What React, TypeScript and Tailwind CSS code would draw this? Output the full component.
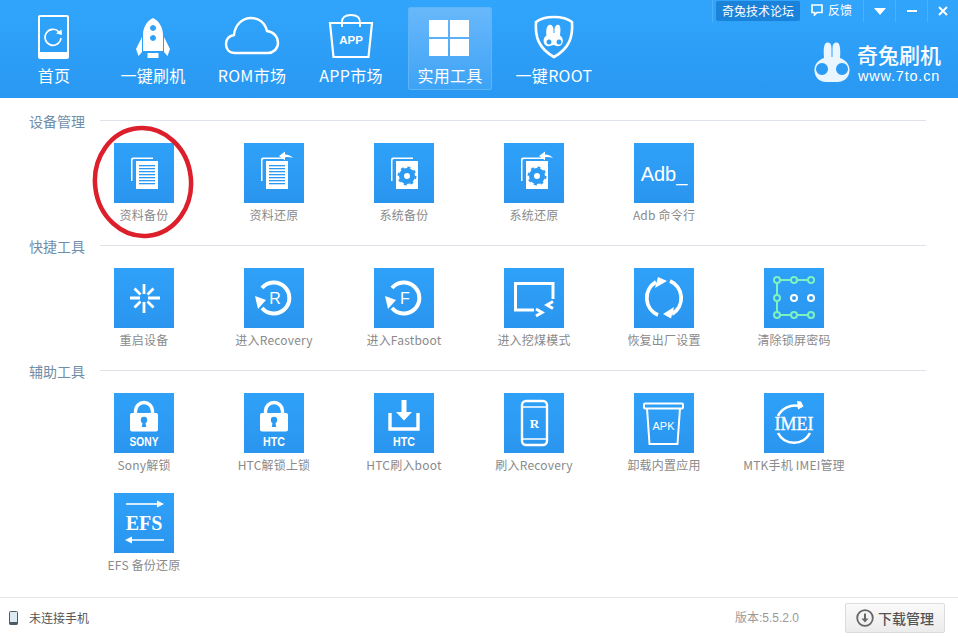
import type { ReactNode } from "react";

const cjk = "font-['Microsoft_YaHei','Noto_Sans_CJK_SC','Liberation_Sans',sans-serif]";

const Svg = ({ children }: { children: ReactNode }) => (
	<svg viewBox="0 0 60 60" className="h-full w-full">
		{children}
	</svg>
);

const BLUE = "#2b9af3";

// white sheet with a lighter one peeking out behind it
const Sheets = ({ children }: { children?: ReactNode }) => (
	<>
		<path d="M17 38V16.5q0-2 2-2h20v1.5H20q-1.500 0-1.500 1.500V38z" fill="#fff" />
		<rect x="22" y="18" width="22" height="28" fill="#fff" />
		{children}
	</>
);

const DocLines = () => (
	<g fill={BLUE}>
		{[22, 25, 28, 31, 34, 37, 40].map((y) => (
			<rect key={y} x="25" y={y} width="16" height="1.300" />
		))}
	</g>
);

const Gear = () => (
	<g>
		<circle cx="33" cy="33" r="5.500" fill="none" stroke={BLUE} strokeWidth="5" />
		<circle cx="33" cy="33" r="8.500" fill="none" stroke={BLUE} strokeWidth="2" strokeDasharray="3 3.700" />
	</g>
);

const BackArrow = () => (
	<g fill="#fff">
		<path d="M35 13l6-4.500v3q5 0 8 3.500-3-1.200-8-.8v3z" />
	</g>
);

const Reload = ({ letter }: { letter: string }) => (
	<Svg>
		<path d="M18 20A15.500 15.500 0 1 1 18 40" fill="none" stroke="#fff" strokeWidth="4" />
		<path d="M11 28l11 4-8 9z" fill="#fff" />
		<text x="31" y="36" textAnchor="middle" fontSize="16" fill="#fff" fontFamily="Liberation Sans, sans-serif">
			{letter}
		</text>
	</Svg>
);

const Lock = ({ label, width }: { label: string; width: number }) => (
	<Svg>
		<path d="M21.500 21v-3a8.500 8.500 0 0 1 17 0v3" fill="none" stroke="#fff" strokeWidth="3.400" />
		<rect x="16" y="20" width="28" height="18.500" rx="2" fill="#fff" />
		<circle cx="30" cy="27" r="3.200" fill={BLUE} />
		<path d="M28.800 28h2.400l1 6h-4.400z" fill={BLUE} />
		<text
			x="30"
			y="52.500"
			textAnchor="middle"
			fontSize="12"
			fontWeight="700"
			textLength={width}
			lengthAdjust="spacingAndGlyphs"
			fill="#fff"
			fontFamily="Liberation Sans, sans-serif"
		>
			{label}
		</text>
	</Svg>
);

const tileIcons: Record<string, ReactNode> = {
	backup: (
		<Svg>
			<Sheets>
				<DocLines />
			</Sheets>
		</Svg>
	),
	restore: (
		<Svg>
			<Sheets>
				<DocLines />
			</Sheets>
			<BackArrow />
		</Svg>
	),
	sysBackup: (
		<Svg>
			<Sheets>
				<Gear />
			</Sheets>
		</Svg>
	),
	sysRestore: (
		<Svg>
			<Sheets>
				<Gear />
			</Sheets>
			<BackArrow />
		</Svg>
	),
	adb: (
		<Svg>
			<text x="30" y="38" textAnchor="middle" fontSize="20" fill="#fff" fontFamily="Liberation Sans, sans-serif">
				Adb_
			</text>
		</Svg>
	),
	reboot: (
		<Svg>
			<g stroke="#fff" strokeWidth="2.800">
				<path d="M30 16v10M30 34v11M16 30h10M34 30h12" />
				<path d="M20.500 20.500l6 6M33.500 33.500l6 6M39.500 20.500l-6 6M26.500 33.500l-6 6" />
			</g>
		</Svg>
	),
	recovery: <Reload letter="R" />,
	fastboot: <Reload letter="F" />,
	dig: (
		<Svg>
			<path d="M49 31V15.500H11.500V42H30" fill="none" stroke="#fff" strokeWidth="3" />
			<path d="M32 41l6 3.500-6 3.500M49 33.500l-6 3.500 6 3.500" fill="none" stroke="#fff" strokeWidth="3" />
		</Svg>
	),
	reset: (
		<Svg>
			<path d="M24 47A18.500 18.500 0 0 1 22 14" fill="none" stroke="#fff" strokeWidth="3.800" />
			<path d="M21 20l3-11 9 4z" fill="#fff" />
			<path d="M36 13A18.500 18.500 0 0 1 38 46" fill="none" stroke="#fff" strokeWidth="3.800" />
			<path d="M40 39l-11 7 8 4.500z" fill="#fff" />
		</Svg>
	),
	pattern: (
		<Svg>
			<path d="M13 12h34M13 12v35M13 47h34" fill="none" stroke="#7df2bf" strokeWidth="2" />
			{[
				[13, 12],
				[30, 12],
				[47, 12],
				[13, 30],
				[13, 47],
				[30, 47],
				[47, 47],
			].map(([cx, cy]) => (
				<circle key={`${cx}-${cy}`} cx={cx} cy={cy} r="3" fill={BLUE} stroke="#7df2bf" strokeWidth="2" />
			))}
			<circle cx="30" cy="30" r="3" fill="none" stroke="#fff" strokeWidth="2" />
			<circle cx="47" cy="30" r="3" fill="none" stroke="#fff" strokeWidth="2" />
		</Svg>
	),
	sony: <Lock label="SONY" width={29} />,
	htc: <Lock label="HTC" width={22} />,
	htcBoot: (
		<Svg>
			<path d="M16 20v16h28V20" fill="none" stroke="#fff" strokeWidth="3.400" />
			<path d="M27.500 7h5v12h5.500l-8 8.500-8-8.500h5.500z" fill="#fff" />
			<text
				x="30"
				y="52.500"
				textAnchor="middle"
				fontSize="12"
				fontWeight="700"
				textLength={22}
				lengthAdjust="spacingAndGlyphs"
				fill="#fff"
				fontFamily="Liberation Sans, sans-serif"
			>
				HTC
			</text>
		</Svg>
	),
	flashR: (
		<Svg>
			<rect x="18" y="8" width="25" height="44" rx="4" fill="none" stroke="#fff" strokeWidth="2.400" />
			<path d="M18 14h25M18 46h25" stroke="#fff" strokeWidth="1.600" />
			<text x="30.500" y="35" textAnchor="middle" fontSize="13" fontWeight="700" fill="#fff" fontFamily="Liberation Serif, serif">
				R
			</text>
		</Svg>
	),
	apk: (
		<Svg>
			<rect x="10" y="10.500" width="39" height="5" rx="1" fill="none" stroke="#fff" strokeWidth="2" />
			<path d="M13 15l2.500 36h28L46 15" fill="none" stroke="#fff" strokeWidth="2" />
			<text x="29.500" y="37" textAnchor="middle" fontSize="11" fill="#fff" fontFamily="Liberation Sans, sans-serif">
				APK
			</text>
		</Svg>
	),
	imei: (
		<Svg>
			<path d="M14 23a19 19 0 0 1 21-10" fill="none" stroke="#fff" strokeWidth="2.600" />
			<path d="M33 8l4 .5 2.500 5-5.500 3z" fill="#fff" />
			<path d="M14 40a18 18 0 0 0 32 0" fill="none" stroke="#fff" strokeWidth="2.600" />
			<text x="30" y="37" textAnchor="middle" fontSize="18" stroke="#fff" strokeWidth="0.300" fill="#fff" fontFamily="Liberation Serif, serif">
				IMEI
			</text>
		</Svg>
	),
	efs: (
		<Svg>
			<path d="M12 11h32" stroke="#fff" strokeWidth="1.600" />
			<path d="M50 11l-7-3.500v7z" fill="#fff" />
			<text x="30" y="37" textAnchor="middle" fontSize="20" fontWeight="700" fill="#fff" fontFamily="Liberation Serif, serif">
				EFS
			</text>
			<path d="M17 47h33" stroke="#fff" strokeWidth="1.600" />
			<path d="M11 47l7-3.500v7z" fill="#fff" />
		</Svg>
	),
};

const sections = [
	{
		title: "设备管理",
		items: [
			["backup", "资料备份"],
			["restore", "资料还原"],
			["sysBackup", "系统备份"],
			["sysRestore", "系统还原"],
			["adb", "Adb 命令行"],
		],
	},
	{
		title: "快捷工具",
		items: [
			["reboot", "重启设备"],
			["recovery", "进入Recovery"],
			["fastboot", "进入Fastboot"],
			["dig", "进入挖煤模式"],
			["reset", "恢复出厂设置"],
			["pattern", "清除锁屏密码"],
		],
	},
	{
		title: "辅助工具",
		items: [
			["sony", "Sony解锁"],
			["htc", "HTC解锁上锁"],
			["htcBoot", "HTC刷入boot"],
			["flashR", "刷入Recovery"],
			["apk", "卸载内置应用"],
			["imei", "MTK手机 IMEI管理"],
			["efs", "EFS 备份还原"],
		],
	},
];

const navItems: { label: string; icon: ReactNode; active?: boolean; last?: boolean }[] = [
	{
		label: "首页",
		icon: (
			<>
				<path
					fillRule="evenodd"
					d="M16 1h27q2 0 2 2v40q0 2-2 2H16q-2 0-2-2V3q0-2 2-2zm0 2v35h27V3z"
					fill="#fff"
				/>
				<path d="M35 18a8 8 0 1 0 2 6" fill="none" stroke="#fff" strokeWidth="1.600" />
				<path d="M32 19.500l5.500-4 .5 5.500z" fill="#fff" />
			</>
		),
	},
	{
		label: "一键刷机",
		icon: (
			<>
				<path
					fillRule="evenodd"
					d="M30 4c6 3 10 9 10 17v16H20V21c0-8 4-14 10-17zm0 7a3 3 0 1 0 .01 0zm0 10a3 3 0 1 0 .01 0z"
					fill="#fff"
				/>
				<path d="M19 23v15l-3.500 4-2.500-7zM41 23v15l3.500 4 2.500-7z" fill="#fff" />
				<rect x="24.500" y="39" width="11" height="5" fill="#fff" />
			</>
		),
	},
	{
		label: "ROM市场",
		icon: (
			<path
				d="M13 39C7 39 4 35 4 30c0-5 3-8 8-9C13 10 21 4 29 4c8 0 14 5 16 13 7 1 11 6 11 12 0 6-5 10-10 10z"
				fill="none"
				stroke="#fff"
				strokeWidth="2.400"
			/>
		),
	},
	{
		label: "APP市场",
		icon: (
			<>
				<path d="M9 9h42l-3.500 34h-35z" fill="none" stroke="#fff" strokeWidth="2.200" />
				<path d="M21 13V8q0-7 9-7t9 7v5" fill="none" stroke="#fff" strokeWidth="1.800" />
				<text x="30" y="30" textAnchor="middle" fontSize="11.500" fontWeight="700" fill="#fff" fontFamily="Liberation Sans, sans-serif">
					APP
				</text>
			</>
		),
	},
	{
		label: "实用工具",
		active: true,
		icon: (
			<>
				<rect x="9" y="6" width="19" height="17" fill="#fff" />
				<rect x="30" y="6" width="19" height="17" fill="#fff" />
				<rect x="9" y="25" width="19" height="17" fill="#fff" />
				<rect x="30" y="25" width="19" height="17" fill="#fff" />
			</>
		),
	},
	{
		label: "一键ROOT",
		last: true,
		icon: (
			<>
				<path
					d="M30 3c7 0 13 1 18 5 1 14-2 26-18 35C14 34 11 22 12 8c5-4 11-5 18-5z"
					fill="none"
					stroke="#fff"
					strokeWidth="2.600"
				/>
				<path
					fillRule="evenodd"
					d="M25 11c2.500-1 4 1 4.500 4v4h1v-4c.5-3 2-5 4.500-4 2 1.500 1.500 7 1 10.500 3.500 2 4 7.500.5 10-2 1.300-5 .5-6.500-.5h-1C27 32 24 32.800 22 31.500c-3.500-2.500-3-8 .5-10-.5-3.500-.5-9 2.500-10.500zm0 14.500a2.500 2.500 0 1 0 .01 0zm10 0a2.500 2.500 0 1 0 .01 0z"
					fill="#fff"
				/>
			</>
		),
	},
];

function NavItem({ label, icon, active, last }: (typeof navItems)[number]) {
	return (
		<div
			className={`flex h-[83px] w-[84px] flex-col items-center rounded-[2px] ${last ? "ml-[5px]" : ""} ${
				active ? "border border-[#5db5f8] bg-gradient-to-b from-[#68b8fb] to-[#3da3f5]" : ""
			}`}
		>
			<svg viewBox="0 0 60 48" className={`h-[48px] w-[60px] shrink-0 ${active ? "mt-[6px]" : "mt-[7px]"}`}>
				{icon}
			</svg>
			<span className="mt-[1px] whitespace-nowrap text-[16px] leading-[24px] tracking-[0.3px] text-white">{label}</span>
		</div>
	);
}

function Tile({ icon, label }: { icon: string; label: string }) {
	return (
		<div className="flex h-[80px] w-[130px] flex-col items-center">
			<div className="h-[60px] w-[60px] bg-gradient-to-b from-[#2fa1f9] to-[#2a95ee]">{tileIcons[icon]}</div>
			<span className="mt-[4px] whitespace-nowrap text-[12px] leading-[16px] tracking-[0.2px] text-[#8a8a8a]">{label}</span>
		</div>
	);
}

export default function App() {
	return (
		<div className={`relative flex h-[637px] w-[958px] flex-col overflow-hidden bg-white ${cjk}`}>
			{/* Top bar */}
			<header className="flex h-[98px] shrink-0 justify-between bg-gradient-to-b from-[#31a5fc] to-[#2998f2]">
				<nav className="flex items-start gap-[15px] pl-[12px] pt-[7px]">
					{navItems.map((item) => (
						<NavItem key={item.label} {...item} />
					))}
				</nav>

				<div className="flex flex-col items-end">
					{/* Window buttons */}
					<div className="flex h-[22px] items-start text-[12px] leading-[20px] text-white">
						<div className="flex h-[22px] items-start border-l border-[#4fb0f7] pl-[3px]">
							<span className="mt-[1px] flex h-[20px] w-[84px] items-center justify-center rounded-[2px] bg-[#1b82da]">
								奇兔技术论坛
							</span>
						</div>
						<div className="flex h-[22px] w-[64px] items-center justify-center gap-[5px] border-r border-[#4fb0f7] pb-[2px]">
							<svg viewBox="0 0 12 12" className="h-[12px] w-[12px]">
								<path d="M1 1h10v7.500H6L3.500 11V8.500H1z" fill="none" stroke="#fff" strokeWidth="1.600" />
							</svg>
							<span>反馈</span>
						</div>
						<div className="flex h-[22px] w-[32px] items-center justify-center border-r border-[#4fb0f7] pt-[1px]">
							<svg viewBox="0 0 12 7" className="h-[7px] w-[12px]">
								<path d="M0 0h12L6 7z" fill="#fff" />
							</svg>
						</div>
						<div className="flex h-[22px] w-[32px] items-center justify-center border-r border-[#4fb0f7]">
							<span className="h-[2px] w-[10px] bg-white" />
						</div>
						<div className="flex h-[22px] w-[30px] items-center justify-center">
							<svg viewBox="0 0 10 10" className="h-[10px] w-[10px]">
								<path d="M1 1l8 8M9 1l-8 8" stroke="#fff" strokeWidth="2" />
							</svg>
						</div>
					</div>

					{/* Logo */}
					<div className="mt-[20px] flex items-start gap-[7px] pr-[17px]">
						<svg viewBox="0 0 36 40" className="h-[40px] w-[36px]">
							<path
								fillRule="evenodd"
								d="M12 1c3.500-1.500 5.500 1 5.500 5v9h1V6c0-4 2-6.500 5.500-5 2.500 1.500 2.500 9 2 15 6 2 10 7 9.500 13-.5 7-6 11-12 11H12C6 40 1 36 .5 29 0 23 4 18 10 16c-.5-6-.5-13.500 2-15zM8 21a6 6 0 1 0 .01 0zm20 0a6 6 0 1 0 .01 0z"
								fill="#eaf6ff"
							/>
						</svg>
						<div className="flex w-[84px] flex-col items-center text-white">
							<span className="mt-[-1px] text-[21px] font-medium leading-[26px] whitespace-nowrap">奇兔刷机</span>
							<span className="font-['Liberation_Sans',sans-serif] text-[14.500px] leading-[18px] tracking-[0.8px] whitespace-nowrap">
								www.7to.cn
							</span>
						</div>
					</div>
				</div>
			</header>

			{/* Tool sections */}
			<main className="min-h-0 flex-1 pt-[15px]">
				{sections.map((section) => (
					<section key={section.title} className="pb-[15px]">
						<div className="flex h-[18px] items-center pl-[29px] pr-[32px]">
							<span className="w-[71px] pb-[2px] text-[14px] leading-[18px] text-[#6f8ea8]">{section.title}</span>
							<span className="h-px flex-1 -translate-y-[2px] bg-[#dde3e8]" />
						</div>
						<div className="mt-[12px] grid grid-cols-[repeat(6,130px)] gap-y-[20px] pl-[79px]">
							{section.items.map(([icon, label]) => (
								<Tile key={icon} icon={icon} label={label} />
							))}
						</div>
					</section>
				))}
			</main>

			{/* Status bar */}
			<footer className="flex h-[40px] shrink-0 items-center border-t border-[#e6e6e6] pl-[9px] pr-[13px]">
				<svg viewBox="0 0 9 14" className="h-[14px] w-[9px]">
					<rect x="0.500" y="0.500" width="8" height="13" rx="1" fill="#dfe9f0" stroke="#4a5a66" />
					<rect x="0.500" y="11" width="8" height="2.500" fill="#4a5a66" />
				</svg>
				<span className="ml-[11px] text-[12px] text-[#555]">未连接手机</span>
				<span className="ml-auto font-['Liberation_Sans','Noto_Sans_CJK_SC',sans-serif] text-[12px] text-[#999]">
					版本:5.5.2.0
				</span>
				<button className="ml-[46px] flex h-[30px] w-[100px] items-center justify-center gap-[4px] rounded-[2px] border border-[#dcdcdc] bg-gradient-to-b from-[#fafafa] to-[#ececec] pt-[1px] text-[14px] font-medium text-[#555]">
					<svg viewBox="0 0 18 18" className="h-[18px] w-[18px]">
						<circle cx="9" cy="9" r="7.800" fill="none" stroke="#666" strokeWidth="1.800" />
						<path d="M8 4.500h2v5h2.500L9 13.500l-3.500-4H8z" fill="#666" />
					</svg>
					下载管理
				</button>
			</footer>

			{/* Red hand-drawn mark over the first tile */}
			<svg viewBox="0 0 102 114" className="pointer-events-none absolute left-[92px] top-[125px] h-[114px] w-[102px]">
				<ellipse cx="51" cy="57" rx="48" ry="54" fill="none" stroke="#dc1f2b" strokeWidth="4.500" transform="rotate(-6 51 57)" />
			</svg>
		</div>
	);
}
